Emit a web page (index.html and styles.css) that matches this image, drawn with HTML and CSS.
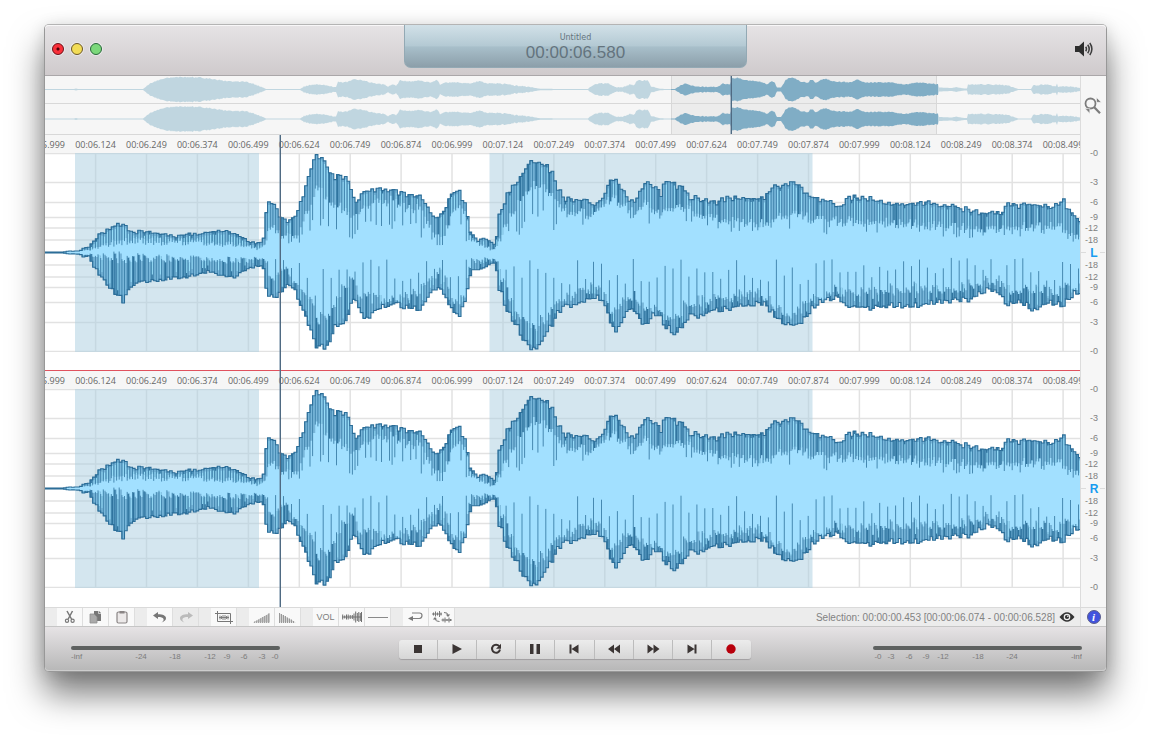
FILE: index.html
```html
<!DOCTYPE html>
<html lang="en">
<head>
<meta charset="utf-8">
<title>Untitled</title>
<link rel="stylesheet" href="styles.css">
</head>
<body>
<main class="window">
  <header class="titlebar">
    <div class="lights">
      <button class="light close" aria-label="Close"></button>
      <button class="light minimize" aria-label="Minimize"></button>
      <button class="light zoom" aria-label="Zoom"></button>
    </div>
    <div class="lcd">
      <div class="lcd-title">Untitled</div>
      <div class="lcd-time">00:00:06.580</div>
    </div>
    <div class="title-right">
      <button class="plain" aria-label="Volume">
        <svg width="20" height="16" viewBox="0 0 20 16"><path d="M1 5h4l5-4.500v15L5 11H1z" fill="#2e2e2e"/><g fill="none" stroke="#3c3c3c" stroke-width="1.500"><path d="M11.700 5.800q1.600 2.200 0 4.400"/><path d="M13.700 3.800q3 4.200 0 8.400"/><path d="M15.800 2q4.200 6 0 12"/></g></svg>
      </button>
    </div>
  </header>

  <section class="overview-row">
    <div class="overview">
      <svg class="overview-wave" viewBox="45 76 1035 58" preserveAspectRatio="none" aria-hidden="true"></svg>
      <div class="playhead overview-head"></div>
    </div>
    <div class="side">
      <button class="plain" aria-label="Zoom tool">
        <svg width="18" height="20" viewBox="0 0 18 20"><circle cx="6.500" cy="7.500" r="5" fill="none" stroke="#7c7c7c" stroke-width="1.800"/><path d="M10 11l6 6.300" stroke="#7c7c7c" stroke-width="2.200"/><path d="M12.500 1.500v4.800h4.800zM1 12.600h4.800v4.800z" fill="#7c7c7c" stroke="#f6f6f6" stroke-width=".6"/></svg>
      </button>
    </div>
  </section>

  <section class="tracks">
    <div class="track">
      <div class="track-main">
        <div class="ruler"></div>
        <svg class="wave" viewBox="45 153 1035 199" preserveAspectRatio="none" aria-hidden="true"></svg>
      </div>
      <div class="side"><svg class="scale" data-channel="L" width="25" height="236" viewBox="0 0 25 236"></svg></div>
    </div>
    <div class="track">
      <div class="track-main">
        <div class="ruler"></div>
        <svg class="wave" viewBox="45 153 1035 199" preserveAspectRatio="none" aria-hidden="true"></svg>
      </div>
      <div class="side"><svg class="scale" data-channel="R" width="25" height="236" viewBox="0 0 25 236"></svg></div>
    </div>
    <div class="playhead-lane"><div class="playhead main-head"></div></div>
  </section>

  <section class="toolbar">
    <div class="tool-groups">
      <div class="group">
        <button class="tool" aria-label="Cut"><svg width="12" height="14" viewBox="0 0 12 14" fill="none" stroke="#777" stroke-width="1.200"><path d="M3 1l4.500 8M8.500 1L4.200 9" stroke-width="1.500"/><circle cx="3" cy="10.800" r="1.600"/><circle cx="8.600" cy="10.800" r="1.600"/></svg></button>
        <button class="tool" aria-label="Copy"><svg width="13" height="14" viewBox="0 0 13 14"><path d="M5 1h5l2 2v8H5z" fill="#777"/><path d="M1 4h4l3 3v6H1z" fill="#aaa" stroke="#8f8f8f" stroke-width=".8"/><path d="M9.500 1v2.500H12" stroke="#eee" fill="none" stroke-width=".7"/></svg></button>
        <button class="tool" aria-label="Paste"><svg width="12" height="14" viewBox="0 0 12 14"><rect x="1" y="2" width="10" height="11" rx="1.500" fill="#ece9e9" stroke="#8a8585" stroke-width="1.200"/><rect x="3.500" y="1" width="5" height="2.500" fill="#8a8585"/></svg></button>
      </div>
      <div class="group">
        <button class="tool" aria-label="Undo"><svg width="14" height="12" viewBox="0 0 14 12"><path d="M0 4.500L5 1v2.300c5 0 8 1.500 8 4 0 2-2 3.500-4.500 4.200 1.500-1 2.500-2 2-3.400C10 6.300 8 5.900 5 5.900V8z" fill="#777"/></svg></button>
        <button class="tool" aria-label="Redo" disabled><svg width="14" height="12" viewBox="0 0 14 12"><path d="M14 4.500L9 1v2.300c-5 0-8 1.500-8 4 0 2 2 3.500 4.500 4.200-1.500-1-2.500-2-2-3.400C4 6.300 6 5.900 9 5.900V8z" fill="#bbb"/></svg></button>
      </div>
      <div class="group">
        <button class="tool" aria-label="Crop"><svg width="18" height="13" viewBox="0 0 18 13"><path d="M0 2.500h15.500V13M2.500 0v10.500H18" fill="none" stroke="#777"/><path d="M4 6.500h10M5 4.500v4M6.500 5v3M8 4v5M10 4v5M11.500 5v3M13 4.500v4" stroke="#777" stroke-width=".9"/></svg></button>
      </div>
      <div class="group">
        <button class="tool" aria-label="Fade in"><svg width="18" height="11" viewBox="0 0 18 11"><path d="M0 10.500L17 1v9.500z" fill="#c4c4c4"/><path d="M1.500 9.500V11M3.500 8.500V11M5.500 7.500V11M7.500 6.300V11M9.500 5V11M11.500 4V11M13.500 3V11M15.500 1.500V11" stroke="#a2a2a2"/></svg></button>
        <button class="tool" aria-label="Fade out"><svg width="18" height="11" viewBox="0 0 18 11"><path d="M0 1v9.500h17z" fill="#d2d2d2"/><path d="M.5 1V11M2.500 2V11M4.500 3V11M6.500 4V11M8.500 5.500V11M10.500 6.500V11M12.500 7.500V11M14.500 9V11" stroke="#999"/></svg></button>
      </div>
      <div class="group">
        <button class="tool">VOL</button>
        <button class="tool" aria-label="Normalize"><svg width="20" height="12" viewBox="0 0 20 12"><path d="M0 6h20" stroke="#777"/><path d="M.7 3.500v5M2.700 4.500v3M4.500 3.500v5M6.200 3.500v5M8.200 4v4M10.300 4v4M12 2.500v7M13.700.5v11M15.300 2v8M16.800 1v10M18.300 2v8M19.500 1v10" stroke="#6f6f6f"/></svg></button>
        <button class="tool" aria-label="Silence"><svg width="20" height="3" viewBox="0 0 20 3"><path d="M0 1.500h20" stroke="#8a8a8a"/></svg></button>
      </div>
      <div class="group">
        <button class="tool" aria-label="Loop"><svg width="15" height="10" viewBox="0 0 15 10"><path d="M4 1h7.500q2.500 0 2.500 2.500T11.500 6.500H4" fill="none" stroke="#808080" stroke-width="1.200"/><path d="M0 6.500L5 4v5z" fill="#777"/></svg></button>
        <button class="tool" aria-label="Swap channels"><svg width="20" height="12" viewBox="0 0 20 12"><path d="M0 3h10M1.500 1.500v3M3.500.5v5M5.500 1.500v3M7.500 0v6M9 1.500v3M9.500 9H20M11 7.500v3M13 6.500v5M15 8v2M17 6.500v5M18.500 8v2" stroke="#777"/><path d="M12 1.500q4 0 4 2.500M7.500 10.500q-4 0-4.500-2.500" fill="none" stroke="#777"/><path d="M13.800 3.500h4.400L16 6zM.8 8.500h4.400L3 6z" fill="#777"/></svg></button>
      </div>
    </div>
    <div class="status">
      <span class="selection">Selection: 00:00:00.453 [00:00:06.074 - 00:00:06.528]</span>
      <button class="plain" aria-label="Show selection"><svg width="16" height="12" viewBox="0 0 16 12"><path d="M.5 6Q8-3.500 15.500 6 8 15.500.5 6z" fill="#333"/><circle cx="8" cy="6" r="3.300" fill="#eee"/><circle cx="8" cy="6" r="2.100" fill="#333"/><circle cx="8.800" cy="5.300" r=".8" fill="#eee"/></svg></button>
    </div>
    <div class="side info-cell"><button class="info" aria-label="Info">i</button></div>
  </section>

  <footer class="bottom">
    <svg class="meter" data-side="left" width="209" height="16" viewBox="0 0 209 16"></svg>
    <div class="transport">
      <button aria-label="Stop"><svg width="14" height="12" viewBox="0 0 14 12"><path d="M3 2h8v8H3z"/></svg></button>
      <button aria-label="Play"><svg width="14" height="12" viewBox="0 0 14 12"><path d="M2.500 1l9.500 5-9.500 5z"/></svg></button>
      <button aria-label="Repeat"><svg width="14" height="12" viewBox="0 0 14 12"><path d="M10.200 3.200A4 4 0 1 0 11 6.500" fill="none" stroke="#3b3534" stroke-width="2"/><path d="M12 .8v5H7z"/></svg></button>
      <button aria-label="Pause"><svg width="14" height="12" viewBox="0 0 14 12"><path d="M2 1h3.500v10H2zM8.500 1H12v10H8.500z"/></svg></button>
      <button aria-label="Go to start"><svg width="14" height="12" viewBox="0 0 14 12"><path d="M2.500 1.500h2v9h-2zM11.500 1.500v9L4.500 6z"/></svg></button>
      <button aria-label="Rewind"><svg width="14" height="12" viewBox="0 0 14 12"><path d="M7 1.500v9L1 6zM13 1.500v9L7 6z"/></svg></button>
      <button aria-label="Fast forward"><svg width="14" height="12" viewBox="0 0 14 12"><path d="M1.500 1.500v9l6-4.500zM7.500 1.500v9l6-4.500z"/></svg></button>
      <button aria-label="Go to end"><svg width="14" height="12" viewBox="0 0 14 12"><path d="M2.500 1.500v9l7-4.500zM9.500 1.500h2v9h-2z"/></svg></button>
      <button aria-label="Record"><svg width="14" height="12" viewBox="0 0 14 12"><circle cx="7" cy="6" r="4.700" fill="#b8000c"/></svg></button>
    </div>
    <svg class="meter" data-side="right" width="209" height="16" viewBox="0 0 209 16"></svg>
  </footer>
</main>
<script src="app.js"></script>
</body>
</html>
```
FILE: styles.css
```css
* { box-sizing: border-box; }

body {
  margin: 0;
  padding: 24px 43px 68px 44px;
  background: #fff;
  font-family: "Liberation Sans", Arial, sans-serif;
}

button {
  margin: 0;
  padding: 0;
  border: 0;
  background: none;
  font-family: inherit;
}

svg { display: block; }

.window {
  display: flex;
  flex-direction: column;
  border: 1px solid #989898;
  border-top-color: #b4b4b4;
  border-radius: 5px;
  background: #fff;
  box-shadow: 0 22px 34px rgba(0, 0, 0, .52), 0 2px 16px rgba(0, 0, 0, .12);
}

.titlebar {
  display: grid;
  grid-template-columns: 1fr 343px 1fr;
  height: 51px;
  border-bottom: 1px solid #aaa7a9;
  border-radius: 4px 4px 0 0;
  background: linear-gradient(#e6e3e5, #cfcacc);
  box-shadow: inset 0 1px #f8f7f8;
}

.lights {
  display: flex;
  align-items: center;
  gap: 7px;
  padding: 0 0 2px 7px;
}

.light {
  width: 12px;
  height: 12px;
  border: 1px solid #26513a;
  border-radius: 50%;
  box-shadow: 0 0 0 1px rgba(255, 255, 255, .4);
}

.close { border-color: #6f0e16; background: radial-gradient(circle, #4c0008 0 1px, #f9303a 2px); }
.minimize { border-color: #6b5628; background: #f2dc56; }
.zoom { border-color: #28663a; background: #7bd87a; }

.lcd {
  height: 43px;
  padding-top: 7px;
  border: 1px solid #93a9b4;
  border-top: 0;
  border-radius: 0 0 7px 7px;
  background: linear-gradient(#d2e1e8, #b3c9d3 50%, #a8bfca 52%, #8c9faa);
  color: #64747e;
  text-align: center;
}

.lcd-title {
  font: 8px/11px "DejaVu Sans", sans-serif;
}

.lcd-time {
  font-size: 17px;
  line-height: 20px;
}

.title-right {
  display: flex;
  align-items: center;
  justify-content: flex-end;
  padding: 0 12px 2px 0;
}

.overview-row, .track { display: flex; }

.overview-row { height: 59px; }

.overview {
  position: relative;
  flex: 1;
  min-width: 0;
  border-bottom: 1px solid #d8d8d8;
  background: #f6f6f6;
}

.overview-wave { width: 100%; height: 58px; }

.side {
  display: flex;
  flex: 0 0 26px;
  justify-content: center;
  border-left: 1px solid #dcdcdc;
  background: #f6f6f6;
}

.overview-row .side {
  align-items: flex-start;
  padding: 20px 2px 0 0;
}

.tracks { position: relative; }

.track-main {
  flex: 1;
  min-width: 0;
  border-bottom: 1px solid #e0525e;
}

.track:nth-child(2) .track-main { border-bottom-color: #fff; }

.ruler {
  display: flex;
  overflow: hidden;
  height: 18px;
  background: #f6f6f6;
  color: #666;
  font: 9px/20px "Open Sans", sans-serif;
  white-space: nowrap;
}

.tick {
  flex: 0 0 4.92%;
  text-align: center;
}

.tick:first-child { margin-left: -2.5%; }

.wave {
  width: 100%;
  height: 199px;
  margin-bottom: 18px;
}

.scale { font-size: 9px; fill: #808080; }
.scale .channel { font-size: 12px; font-weight: bold; fill: #189cf0; }

.playhead-lane {
  position: absolute;
  inset: 0 26px 0 0;
  pointer-events: none;
}

.playhead {
  position: absolute;
  top: 0;
  bottom: 0;
  width: 1px;
  background: #4f6a82;
  box-shadow: -1px 0 rgba(100, 130, 155, .5);
}

.main-head { left: 22.7%; }
.overview-head { left: 66.28%; }

.toolbar {
  display: flex;
  height: 20px;
  border-top: 1px solid #dadada;
  border-bottom: 1px solid #c6c6c6;
  background: #ececec;
}

.tool-groups {
  display: flex;
  gap: 12px;
  padding-left: 12px;
}

.group { display: flex; }

.tool {
  display: flex;
  align-items: center;
  justify-content: center;
  width: 26px;
  border-right: 1px solid #dedede;
  background: #f9f9f9;
  color: #808080;
  font-size: 9px;
}

.tool:disabled { background: #ebebeb; }

.status {
  display: flex;
  flex: 1;
  align-items: center;
  justify-content: flex-end;
  gap: 4px;
  padding-right: 5px;
  color: #828282;
  font-size: 10px;
  white-space: nowrap;
}

.info-cell { align-items: center; background: #f2f2f2; }

.info {
  width: 14px;
  height: 14px;
  border: 1px solid #5c5f8c;
  border-radius: 50%;
  background: #4253de;
  color: #fff;
  font: italic bold 11px/12px "Liberation Serif", serif;
}

.bottom {
  display: flex;
  align-items: center;
  justify-content: space-between;
  height: 44px;
  padding: 0 24px 0 26px;
  border-radius: 0 0 4px 4px;
  background: linear-gradient(#e6e3e5, #b7b7b7);
  box-shadow: inset 0 -1px #cdcdcd;
}

.meter { margin-top: 8px; font-size: 8px; fill: #7c7c7c; }

.transport {
  display: flex;
  width: 352px;
  height: 19px;
  margin-right: 4px;
  border-radius: 3px;
  background: linear-gradient(#ececec, #d6d6d6);
  box-shadow: 0 1px 1px #a09ea0;
}

.transport button {
  display: flex;
  flex: 1;
  align-items: center;
  justify-content: center;
}

.transport button + button { border-left: 1px solid #bcbcbc; }
.transport svg { fill: #3b3534; }
```
FILE: app.js
```js
// Outer envelope: x, upper peak, lower peak.
const OUTER = [
  45,252,253, 64,252,253, 68,251,254, 75,251,254, 80,251,254, 83,248,257, 89,247,256, 94,241,267, 100,234,275, 107,230,284, 113,226,291,
  123,222,302, 127,229,293, 133,232,285, 140,231,282, 150,232,281, 160,234,280, 173,236,278, 183,234,278, 197,234,275,
  210,232,272, 220,231,275, 230,232,277, 233,233,279, 240,236,273, 250,242,268, 263,243,265, 265,226,277, 267,203,296,
  271,200,298, 276,207,298, 280,215,292, 287,220,286, 293,217,289, 299,207,300, 306,187,317, 312,166,332, 316,154,347,
  322,156,346, 325,162,349, 330,173,342, 335,176,326, 343,175,326, 349,180,313, 353,198,298, 357,201,303, 362,192,315,
  366,190,322, 372,191,315, 377,189,308, 390,190,306, 393,189,303, 400,192,305, 407,195,309, 418,197,310, 423,197,306,
  427,207,300, 433,216,290, 440,216,287, 444,210,293, 450,198,307, 455,189,314, 460,192,315, 465,203,303, 470,230,278,
  473,235,270, 478,241,270, 485,237,268, 491,242,263, 496,245,265, 500,208,293, 503,210,295, 506,197,310, 512,186,318,
  519,180,330, 525,168,343, 530,162,347, 533,161,350, 540,163,345, 546,165,333, 553,173,325, 558,187,313, 564,199,307,
  575,198,305, 588,201,300, 592,205,299, 597,203,296, 604,195,302, 611,180,322, 615,176,332, 620,187,327, 627,196,312,
  634,202,310, 640,193,320, 645,182,326, 650,184,320, 657,185,313, 661,195,317, 665,181,327, 670,180,330, 673,182,338,
  679,187,330, 687,190,320, 690,199,313, 697,197,318, 707,201,313, 717,201,311, 727,198,309, 747,198,306, 757,199,304,
  767,195,306, 772,188,313, 780,185,321, 790,182,325, 796,183,326, 804,191,320, 812,197,309, 820,198,302, 830,201,299,
  838,207,298, 844,203,303, 850,197,307, 868,197,309, 877,200,308, 890,203,305, 910,204,307, 927,201,305, 937,206,302,
  957,206,301, 970,210,300, 980,212,295, 990,213,290, 1000,213,293, 1006,205,303, 1010,202,305, 1020,205,302,
  1033,203,310, 1040,205,307, 1050,206,303, 1058,205,305, 1063,198,306, 1068,210,300, 1076,215,292, 1080,221,295
];

// Solid core: x, upper edge, lower edge.
const CORE = [
  45,252,253, 89,250,255, 107,243,258, 125,239,259, 140,240,258, 200,241,260, 240,244,261, 263,249,259, 265,240,265,
  271,226,278, 285,234,270, 299,232,285, 312,200,305, 318,185,320, 330,204,318, 343,206,288, 353,217,280, 362,208,297,
  377,202,299, 390,199,300, 400,205,302, 420,207,294, 433,230,273, 440,240,272, 447,228,280, 455,205,303, 465,208,298,
  471,240,262, 495,250,259, 503,232,280, 506,223,290, 519,202,313, 533,183,331, 546,186,319, 553,193,313, 564,210,297,
  590,213,289, 604,202,295, 615,197,316, 634,212,292, 645,202,312, 660,214,308, 673,208,321, 690,208,302, 717,218,299,
  740,221,296, 760,224,294, 780,214,310, 796,213,316, 812,218,297, 835,220,292, 860,220,294, 900,222,290, 950,225,288,
  990,230,282, 1010,226,290, 1060,226,291, 1080,237,284
];

// Overview: x, half height.
const OVERVIEW = [
  45,.5, 74,.5, 76,1, 78,.5, 143,.5, 145,2, 150,6, 160,10, 170,12, 185,12.5, 200,12, 215,10, 230,8, 245,8, 255,5, 263,2, 266,.5,
  300,.5, 304,3, 315,5, 325,4.5, 333,2.5, 336,3, 338,8, 345,7, 355,10.5, 362,9, 375,6, 385,5, 388,2.5, 392,5, 396,3.5,
  400,9, 412,8, 420,9, 430,7, 437,9.5, 440,5, 445,7, 460,7, 470,6, 480,8.5, 486,6, 500,6, 515,4, 530,2.5, 540,.7,
  588,.5, 592,4, 598,6, 608,6, 615,2.5, 622,2, 630,5, 634,4, 637,9, 648,9, 651,3, 660,.7, 675,.5, 680,4, 685,6, 695,3,
  718,2.5, 722,6, 730,5, 732,11, 738,12, 745,9, 760,8, 768,5, 770,8, 774,8, 777,2, 781,2, 786,10, 792,12.5, 800,8, 808,7,
  811,10, 816,7, 820,9, 826,11, 832,8, 850,7, 857,10, 865,7, 890,7, 905,5, 917,7, 930,6, 938,5, 939,2, 952,1.5,
  955,2.5, 964,1, 967,1, 968,5, 990,5, 1008,4, 1014,2, 1018,.5, 1031,.5, 1033,4, 1045,5, 1056,3, 1057,6, 1058,3,
  1070,3, 1080,1.5
];

const TICK_START = 95.6;
const TICK_STEP = 50.92;
const DB_LINES = [153.5, 182.5, 202.5, 217.5, 228, 240, 252.5, 265, 277, 287.5, 302.5, 322.5, 351.5];
const SELECTIONS = [[75, 259], [489.5, 812.5]];

function sample(table, width, x) {
  for (let i = width; i < table.length; i += width) {
    if (x <= table[i]) {
      const t = (x - table[i - width]) / (table[i] - table[i - width]);
      return Array.from({ length: width - 1 }, (_, k) =>
        table[i - width + 1 + k] + t * (table[i + 1 + k] - table[i - width + 1 + k]));
    }
  }
  return table.slice(-width + 1);
}

function noise(n) {
  const v = Math.sin(n * 127.1 + 11.7) * 43758.5453;
  return v - Math.floor(v);
}

function waveMarkup() {
  let grid = '';
  for (let k = 0; k < 20; k++) {
    const x = (TICK_START + k * TICK_STEP).toFixed(1);
    grid += `M${x} 153V352`;
  }
  DB_LINES.forEach(y => { grid += `M45 ${y}H1080`; });

  const step = 2.65;
  const top = [], bottom = [], coreTop = [], coreBottom = [];
  let lines = '', deep = '', glints = '';
  let i = 0;
  for (let x = 45; x < 1080; x += step, i++) {
    const end = Math.min(1080, x + step);
    const [a, b] = sample(OUTER, 3, x + step / 2);
    const [c, d] = sample(CORE, 3, x + step / 2);
    const size = Math.min(1, (b - a) / 70);
    const dip = i % 3 === 1 ? 2 : 0;
    const up = a + ((noise(i) - .5) * 4 + dip) * size;
    const down = b + ((noise(i + 900) - .5) * 4 - dip) * size;
    top.push(`${x.toFixed(1)} ${up.toFixed(1)}`, `${end.toFixed(1)} ${up.toFixed(1)}`);
    bottom.push(`${x.toFixed(1)} ${down.toFixed(1)}`, `${end.toFixed(1)} ${down.toFixed(1)}`);
    const ct = Math.max(up, c + (noise(i + 300) - .5) * 8 * size);
    const cb = Math.min(down, d + (noise(i + 600) - .5) * 12 * size);
    coreTop.push(`${x.toFixed(1)} ${ct.toFixed(1)}`, `${end.toFixed(1)} ${ct.toFixed(1)}`);
    coreBottom.push(`${x.toFixed(1)} ${cb.toFixed(1)}`, `${end.toFixed(1)} ${cb.toFixed(1)}`);
    if (b - a < 8) continue;
    const early = x < 560;
    const longUp = noise(i + 50) > (early ? .5 : .8) ? (250 - ct) * (early ? .7 : .45) * (.5 + noise(i + 51) / 2) : 3;
    const longDown = i % 3 === 0 ? (cb - 256) * (.35 + noise(i + 70) * .6) : 2;
    const lx = x.toFixed(1);
    lines += `M${lx} ${up.toFixed(1)}V${(ct + longUp * size).toFixed(1)}`;
    lines += `M${lx} ${down.toFixed(1)}V${(cb - longDown * size).toFixed(1)}`;
    if (noise(i + 40) > .75) {
      deep += `M${(x + 1).toFixed(1)} ${up.toFixed(1)}V${ct.toFixed(1)}`;
    }
    if (noise(i + 140) > .65) {
      deep += `M${(x + 1).toFixed(1)} ${down.toFixed(1)}V${cb.toFixed(1)}`;
    }
    if (noise(i + 240) > .7 || (x < 262 && i % 4)) {
      glints += `M${(x + 1.3).toFixed(1)} ${(up + 3).toFixed(1)}V${ct.toFixed(1)}`;
    }
    if (noise(i + 340) > .75) {
      glints += `M${(x + 1.3).toFixed(1)} ${(down - 5).toFixed(1)}V${cb.toFixed(1)}`;
    }
  }
  const shape = (t, b) => 'M' + t.join('L') + 'L' + b.slice().reverse().join('L') + 'Z';
  return `<path d="M45 153H1080V352H45Z" fill="#fff"/>
    <path d="${grid}" stroke="#e2e2e2" stroke-width="1.500" fill="none"/>
    ${SELECTIONS.map(([a, b]) => `<path d="M${a} 153H${b}V352H${a}Z" fill="#a9cde0" fill-opacity=".5"/>`).join('')}
    <path d="${shape(top, bottom)}" fill="#78b6da"/>
    <path d="${deep}" stroke="#2f749f" stroke-width="1.400" fill="none"/>
    <path d="${glints}" stroke="#96dcf8" stroke-width="1.200" fill="none"/>
    <path d="${shape(coreTop, coreBottom)}" fill="#a2e0ff"/>
    <path d="${lines}" stroke="#3b7fa8" stroke-width=".9" fill="none"/>
    <path d="M${top.join('L')}M${bottom.join('L')}" stroke="#2b6d98" stroke-width="1.100" fill="none"/>`;
}

function overviewMarkup() {
  const part = (from, to, cy, fill) => {
    const up = [], down = [];
    for (let x = from; x <= to; x++) {
      const [h] = sample(OVERVIEW, 2, x);
      const r = h > 2 ? h + (noise(x) - .5) * 1.2 : h;
      up.push(`${x} ${(cy - r).toFixed(1)}`);
      down.unshift(`${x} ${(cy + r).toFixed(1)}`);
    }
    return `<path d="M${up.concat(down).join('L')}Z" fill="${fill}"/>`;
  };
  let out = '<path d="M671 76H937V134H671Z" fill="#ececec"/><path d="M671.500 76V134M936.500 76V134M45 103.500H1080" stroke="#d8d8d8" fill="none"/>';
  [89.5, 119].forEach(cy => {
    out += part(45, 671, cy, '#c0d6e0') + part(671, 938, cy, '#80adc5') + part(938, 1080, cy, '#c0d6e0');
  });
  return out;
}

function rulerMarkup() {
  let out = '';
  for (let k = 0; k < 21; k++) {
    const ms = 5999 + k * 125;
    const s = String(Math.floor(ms / 1000)).padStart(2, '0');
    out += `<span class="tick">00:${s}.${String(ms % 1000).padStart(3, '0')}</span>`;
  }
  return out;
}

function scaleMarkup(channel) {
  const names = ['-0', '-3', '-6', '-9', '-12', '-18', channel, '-18', '-12', '-9', '-6', '-3', '-0'];
  return '<path d="M0 117.500H5M19 117.500H24" stroke="#dcdcdc"/>' + names.map((name, i) => {
    const y = Math.floor(DB_LINES[i] - 135);
    return name === channel
      ? `<text class="channel" x="13" y="${y + 5}" text-anchor="middle">${name}</text>`
      : `<text x="17" y="${y + 3}" text-anchor="end">${name}</text>`;
  }).join('');
}

function meterMarkup(side) {
  const marks = [['-24', 70], ['-18', 104], ['-12', 139], ['-9', 156], ['-6', 173], ['-3', 191], ['-0', 204]];
  const flip = side === 'right';
  const at = x => flip ? 209 - x : x;
  return '<rect x="0" y="1" width="209" height="4" rx="2" fill="#5e6160"/>' +
    `<text x="${at(0)}" y="14" text-anchor="${flip ? 'end' : 'start'}">-inf</text>` +
    marks.map(([t, x]) => `<text x="${at(x)}" y="14" text-anchor="middle">${t}</text>`).join('');
}

document.querySelector('.overview-wave').innerHTML = overviewMarkup();
document.querySelectorAll('.wave').forEach(el => { el.innerHTML = waveMarkup(); });
document.querySelectorAll('.ruler').forEach(el => { el.innerHTML = rulerMarkup(); });
document.querySelectorAll('.scale').forEach(el => { el.innerHTML = scaleMarkup(el.dataset.channel); });
document.querySelectorAll('.meter').forEach(el => { el.innerHTML = meterMarkup(el.dataset.side); });
```
